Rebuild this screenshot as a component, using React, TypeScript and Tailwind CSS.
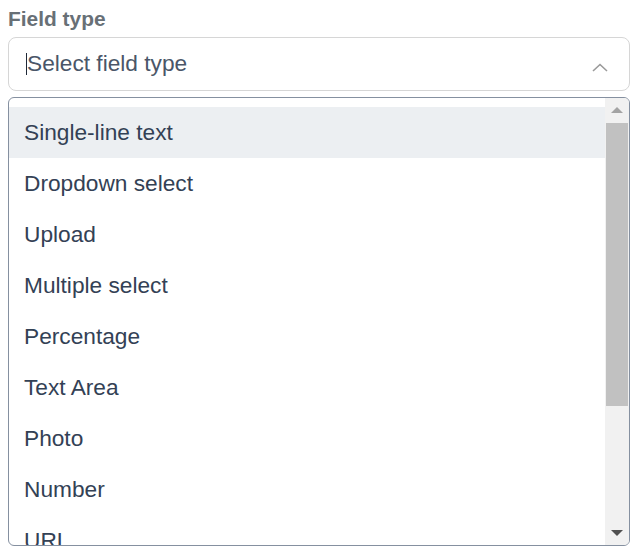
const fieldTypes = [
  'Single-line text',
  'Dropdown select',
  'Upload',
  'Multiple select',
  'Percentage',
  'Text Area',
  'Photo',
  'Number',
  'URL',
]

export default function App() {
  return (
    <div className="min-h-screen bg-white pl-2 pt-[5px] font-['Liberation_Sans',Arial,sans-serif]">
      <div className="w-[622px]">
        {/* Label */}
        <label className="block text-[20.9px] font-bold leading-[28px] text-[#687076]">Field type</label>

        {/* Select input */}
        <div className="mt-1 flex h-[54px] items-center justify-between rounded-lg border border-[#d6d6d6] bg-white pl-[17px] pr-[21px]">
          <div className="flex items-center">
            <span className="inline-block h-[22px] w-px bg-[#1f2937]" />
            <span className="-mt-[2px] text-[22.7px] leading-[26px] text-[#4a5668]">Select field type</span>
          </div>
          <svg width="16" height="9" viewBox="0 0 16 9" fill="none" className="mt-[6px]">
            <path d="M1 8L8 1.5L15 8" stroke="#9a9a9a" strokeWidth="1.6" />
          </svg>
        </div>

        {/* Options list */}
        <div className="mt-[6px] flex h-[449px] overflow-hidden rounded-md border border-[#8590a0] bg-white">
          <ul className="flex-1 overflow-hidden pt-[9px]">
            {fieldTypes.map((item, i) => (
              <li
                key={item}
                className={`flex h-[51px] shrink-0 items-center px-[15px] text-[22.7px] text-[#334155] ${
                  i === 0 ? 'bg-[#eceff2]' : ''
                }`}
              >
                <span className="-mt-px">{item}</span>
              </li>
            ))}
          </ul>

          {/* Scrollbar */}
          <div className="flex w-[24px] flex-col bg-[#f1f1f1]">
            <div className="flex h-[24px] items-center justify-center">
              <svg width="12" height="6" viewBox="0 0 12 6">
                <path d="M0 6L6 0L12 6Z" fill="#a3a3a3" />
              </svg>
            </div>
            <div className="mx-px mt-px h-[283px] bg-[#c1c1c1]" />
            <div className="flex-1" />
            <div className="flex h-[24px] items-center justify-center">
              <svg width="12" height="6" viewBox="0 0 12 6">
                <path d="M0 0L12 0L6 6Z" fill="#505050" />
              </svg>
            </div>
          </div>
        </div>
      </div>
    </div>
  )
}
